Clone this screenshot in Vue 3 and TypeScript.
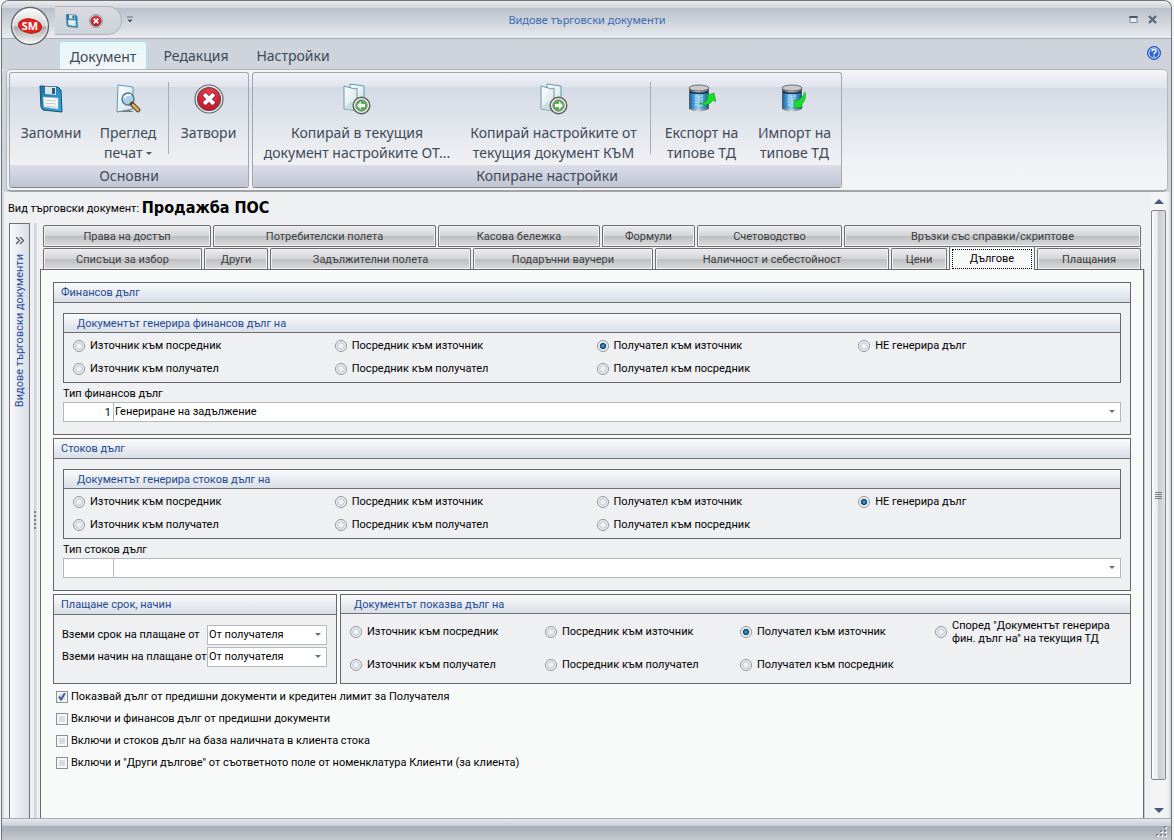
<script setup lang="ts">
import { ref } from 'vue'

const firstTabs = ['Права на достъп', 'Потребителски полета', 'Касова бележка', 'Формули', 'Счетоводство', 'Връзки със справки/скриптове']
const secondTabs = ['Списъци за избор', 'Други', 'Задължителни полета', 'Подаръчни ваучери', 'Наличност и себестойност', 'Цени', 'Дългове', 'Плащания']
const activeTab = ref('Дългове')
const ribbonTabs = ['Документ', 'Редакция', 'Настройки']

const directions = [
  'Източник към посредник', 'Посредник към източник', 'Получател към източник', 'НЕ генерира дълг',
  'Източник към получател', 'Посредник към получател', 'Получател към посредник',
]
const shownDirections = directions.map((d, i) => (i === 3 ? 'Според "Документът генерира фин. дълг на" на текущия ТД' : d))

const debts = ref([
  { id: 'fin', title: 'Финансов дълг', legend: 'Документът генерира финансов дълг на', type: 'Тип финансов дълг', code: '1', name: 'Генериране на задължение', choice: 2 },
  { id: 'stock', title: 'Стоков дълг', legend: 'Документът генерира стоков дълг на', type: 'Тип стоков дълг', code: '', name: '', choice: 3 },
])
const shown = ref(2)
const terms = [
  { id: 'term', label: 'Вземи срок на плащане от' },
  { id: 'method', label: 'Вземи начин на плащане от' },
]
const options = ref([
  { text: 'Показвай дълг от предишни документи и кредитен лимит за Получателя', on: true },
  { text: 'Включи и финансов дълг от предишни документи', on: false },
  { text: 'Включи и стоков дълг на база наличната в клиента стока', on: false },
  { text: 'Включи и "Други дългове" от съответното поле от номенклатура Клиенти (за клиента)', on: false },
])
</script>

<template>
  <div class="window">
    <svg class="defs" width="0" height="0" aria-hidden="true">
      <defs>
        <linearGradient id="blue" x1="0" y1="0" x2="1" y2="1"><stop offset="0" stop-color="#1c6f9c" /><stop offset="1" stop-color="#2fb0e4" /></linearGradient>
        <linearGradient id="paper" x1="0" y1="0" x2="1" y2="1"><stop offset="0" stop-color="#ffffff" /><stop offset="1" stop-color="#cfe0e6" /></linearGradient>
        <linearGradient id="metal" x1="0" y1="0" x2="1" y2="0"><stop offset="0" stop-color="#555" /><stop offset=".45" stop-color="#ddd" /><stop offset="1" stop-color="#555" /></linearGradient>
        <linearGradient id="tank" x1="0" y1="0" x2="1" y2="0"><stop offset="0" stop-color="#1367b4" /><stop offset=".45" stop-color="#8fd0f2" /><stop offset="1" stop-color="#1565a6" /></linearGradient>
        <linearGradient id="orb" x1="0" y1="0" x2="0" y2="1"><stop offset="0" stop-color="#fdfdfd" /><stop offset=".5" stop-color="#d4d4d4" /><stop offset=".52" stop-color="#a8a8a8" /><stop offset="1" stop-color="#fafafa" /></linearGradient>
        <radialGradient id="red" cx=".5" cy=".3" r=".8"><stop offset="0" stop-color="#ee4456" /><stop offset="1" stop-color="#c00824" /></radialGradient>
        <symbol id="floppy" viewBox="0 0 24 28">
          <path d="M1 1l18 1 3 3 1 22-19-2-2-3z" fill="url(#blue)" stroke="#14506f" />
          <path d="M6 1.500l11 .5v8L6 9z" fill="#dfe4e6" /><path d="M13 3h3v6h-3z" fill="#315f79" />
          <path d="M4 12l15 1v11L5 22z" fill="#fafafa" stroke="#b8c4c8" stroke-width=".6" />
          <path d="M6 15l11 1M6 18l11 1M6 21l11 1" stroke="#c6cbce" />
        </symbol>
        <symbol id="stop" viewBox="0 0 30 30">
          <circle cx="15" cy="15" r="14" fill="#ececec" stroke="#666" stroke-width="1.200" />
          <circle cx="15" cy="15" r="11.500" fill="url(#red)" stroke="#5e5052" stroke-width="1.200" />
          <path d="M11.500 11.500l7 7M18.500 11.500l-7 7" stroke="#8f1020" stroke-width="5.400" stroke-linecap="square" />
          <path d="M11.500 11.500l7 7M18.500 11.500l-7 7" stroke="#fff" stroke-width="4" stroke-linecap="square" />
        </symbol>
        <symbol id="preview" viewBox="0 0 26 30">
          <path d="M3 1l15 2v22L2 28z" fill="url(#paper)" stroke="#5f9ab4" />
          <path d="M2 28l12-2 5 2z" fill="#777" />
          <circle cx="13" cy="15" r="6" fill="#a6d3ea" stroke="#5b7686" stroke-width="1.400" />
          <path d="M9 14q2-4 7-3" stroke="#fff" stroke-width="1.600" fill="none" />
          <path d="M17 20l6 6" stroke="#5a4423" stroke-width="4.600" stroke-linecap="round" />
          <path d="M18 21l5 5" stroke="#d8b060" stroke-width="2.600" stroke-linecap="round" />
        </symbol>
        <symbol id="copy" viewBox="0 0 28 32">
          <path d="M7 1l14 2v22H7z" fill="url(#paper)" stroke="#5f9ab4" />
          <path d="M1 3l11 3 2-1v23L1 26z" fill="url(#paper)" stroke="#6c98ac" />
          <path d="M1 26q4-8 12-8v10z" fill="#bcd3d8" opacity=".6" />
          <circle cx="18.500" cy="22.500" r="8.300" fill="#f1f1ee" stroke="#5c5c58" stroke-width="1.400" />
          <circle cx="18.500" cy="22.500" r="5.700" fill="#56b356" stroke="#858580" />
        </symbol>
        <symbol id="drum" viewBox="0 0 28 30">
          <path d="M1 4v21q9 5 20 0V4z" fill="url(#metal)" />
          <path d="M2 7q9 4 18 0v17q-9 3-18 0z" fill="url(#tank)" />
          <path d="M2 7q9 3 18 0v2q-9 2-18 0z" fill="#102c50" />
          <path d="M8 11v12M11 12v11M14 11v12" stroke="#e7f6ff" stroke-width="1" stroke-dasharray="2 1" />
          <ellipse cx="11" cy="4" rx="10" ry="3" fill="#c9c9c9" stroke="#555" stroke-width=".8" />
        </symbol>
      </defs>
    </svg>

    <header class="titlebar">
      <div class="quick">
        <button aria-label="Запомни"><svg width="12" height="14"><use href="#floppy" /></svg></button>
        <button aria-label="Затвори"><svg width="14" height="14"><use href="#stop" /></svg></button>
      </div>
      <button class="more" aria-label="Още команди"><svg width="6" height="7"><path d="M0 1h6M1 4h4L3 6z" fill="#50565e" stroke="#50565e" stroke-width=".8" /></svg></button>
      <h1>Видове търговски документи</h1>
      <div class="controls">
        <button aria-label="Увеличи"><svg width="10" height="10"><path d="M1 1.500h7v6H1z" fill="#e8ecf1" stroke="#7c8a9c" /><path d="M.5 1h8v2h-8z" fill="#4a5565" /></svg></button>
        <button aria-label="Затвори прозореца"><svg width="10" height="10"><path d="M1 1l7 7M8 1L1 8" stroke="#586a80" stroke-width="2.400" /></svg></button>
      </div>
      <button class="orb" aria-label="Меню">
        <svg width="40" height="40" viewBox="0 0 40 40">
          <circle cx="20" cy="20" r="18.500" fill="url(#orb)" stroke="#65696f" stroke-width="1.400" />
          <circle cx="20" cy="20" r="17" fill="none" stroke="#fff" opacity=".8" />
          <ellipse cx="20" cy="20" rx="11.500" ry="7" transform="rotate(8 20 20)" fill="#e3221d" stroke="#b91813" />
          <text x="20" y="24" text-anchor="middle">SM</text>
        </svg>
      </button>
    </header>

    <nav class="ribbon-tabs">
      <button v-for="(t, i) in ribbonTabs" :key="t" :class="{ current: i === 0 }">{{ t }}</button>
      <button class="help" aria-label="Помощ">
        <svg width="14" height="14" viewBox="0 0 14 14"><circle cx="7" cy="7" r="6.500" fill="#2c62d8" stroke="#2450b4" /><circle cx="7" cy="7" r="5.200" fill="none" stroke="#dce8ff" /><path d="M5 5.500q0-2 2-2t2 1.800q0 1-1.200 1.600-.8.400-.8 1.300M7 9.600v1.200" stroke="#fff" stroke-width="1.500" fill="none" /></svg>
      </button>
    </nav>

    <section class="ribbon">
      <div class="ribbon-group">
        <div class="tools">
          <button class="tool w-save"><svg width="24" height="32"><use href="#floppy" /></svg><span>Запомни</span></button>
          <button class="tool w-view"><svg width="26" height="32"><use href="#preview" /></svg><span>Преглед<br>печат <i class="caret"></i></span></button>
          <i class="bar"></i>
          <button class="tool w-close"><svg width="30" height="32"><use href="#stop" /></svg><span>Затвори</span></button>
        </div>
        <footer>Основни</footer>
      </div>
      <div class="ribbon-group">
        <div class="tools wide">
          <button class="tool w-from">
            <svg width="28" height="32"><use href="#copy" /><path d="M14 22.500l4-4v2.500h4v3h-4v2.500z" fill="#fff" /></svg>
            <span>Копирай в текущия<br>документ настройките ОТ...</span>
          </button>
          <button class="tool w-to">
            <svg width="28" height="32"><use href="#copy" /><path d="M23 22.500l-4-4v2.500h-4v3h4v2.500z" fill="#fff" /></svg>
            <span>Копирай настройките от<br>текущия документ КЪМ</span>
          </button>
          <i class="bar"></i>
          <button class="tool w-type">
            <svg width="28" height="32"><use href="#drum" /><path d="M11 20q8 1 9-6l-3-1 9-3 2 9-3-2q-5 8-14 3z" fill="#14e028" stroke="#129a20" stroke-width=".6" /></svg>
            <span>Експорт на<br>типове ТД</span>
          </button>
          <button class="tool w-type">
            <svg width="28" height="32"><use href="#drum" /><path d="M24 9q2 8-4 13l2 2-9 1 1-9 2 2q6-3 8-9z" fill="#14e028" stroke="#129a20" stroke-width=".6" /></svg>
            <span>Импорт на<br>типове ТД</span>
          </button>
        </div>
        <footer>Копиране настройки</footer>
      </div>
    </section>

    <main class="body">
      <div class="page">
        <p class="kind">Вид търговски документ: <strong>Продажба ПОС</strong></p>
        <div class="split">
          <aside class="side">
            <button aria-label="Разгъни"><svg width="8" height="8"><path d="M0 0l3.500 3.500L0 7M4 0l3.500 3.500L4 7" fill="none" stroke="#555b63" stroke-width="1.400" /></svg></button>
            <span>Видове търговски документи</span>
          </aside>
          <div class="splitter"><i></i></div>
          <div class="tabs">
            <div class="tab-row first"><button v-for="t in firstTabs" :key="t" :class="{ active: t === activeTab }" @click="activeTab = t">{{ t }}</button></div>
            <div class="tab-row second"><button v-for="t in secondTabs" :key="t" :class="{ active: t === activeTab }" @click="activeTab = t"><span>{{ t }}</span></button></div>
            <div class="panel">
              <section v-for="d in debts" :key="d.id" class="group">
                <h2>{{ d.title }}</h2>
                <div class="debt">
                  <fieldset class="group inner">
                    <h3>{{ d.legend }}</h3>
                    <div class="radios">
                      <label v-for="(r, i) in directions" :key="r"><input v-model="d.choice" type="radio" :name="d.id" :value="i"><span>{{ r }}</span></label>
                    </div>
                  </fieldset>
                  <label class="type" :for="d.id + '-name'">{{ d.type }}</label>
                  <div class="lookup">
                    <input v-model="d.code" type="text" class="code" :aria-label="d.type + ' код'">
                    <div class="select"><select :id="d.id + '-name'"><option>{{ d.name }}</option></select></div>
                  </div>
                </div>
              </section>
              <div class="pair">
                <section class="group pay">
                  <h2>Плащане срок, начин</h2>
                  <div class="terms">
                    <template v-for="t in terms" :key="t.id">
                      <label :for="t.id">{{ t.label }}</label>
                      <div class="select"><select :id="t.id"><option>От получателя</option></select></div>
                    </template>
                  </div>
                </section>
                <fieldset class="group shows">
                  <h3>Документът показва дълг на</h3>
                  <div class="radios tall">
                    <label v-for="(r, i) in shownDirections" :key="r"><input v-model="shown" type="radio" name="shown" :value="i"><span>{{ r }}</span></label>
                  </div>
                </fieldset>
              </div>
              <div class="checks">
                <label v-for="o in options" :key="o.text">
                  <span class="tick"><input v-model="o.on" type="checkbox"><svg v-if="o.on" width="8" height="8"><path d="M1 3.500l2 3L7 0" fill="none" stroke="#3c639c" stroke-width="2" /></svg></span>
                  {{ o.text }}
                </label>
              </div>
            </div>
          </div>
        </div>
      </div>
      <div class="scroll">
        <button aria-label="Нагоре"><svg width="10" height="5"><path d="M0 5l5-5 5 5z" fill="#43587f" /></svg></button>
        <div class="thumb"><i></i></div>
        <button aria-label="Надолу"><svg width="10" height="5"><path d="M0 0l5 5 5-5z" fill="#43587f" /></svg></button>
      </div>
    </main>

    <footer class="status">
      <svg width="12" height="12"><path d="M9 0h2v2H9zM5 4h2v2H5zM9 4h2v2H9zM1 8h2v2H1zM5 8h2v2H5zM9 8h2v2H9z" fill="#fff" transform="translate(1 1)" /><path d="M9 0h2v2H9zM5 4h2v2H5zM9 4h2v2H9zM1 8h2v2H1zM5 8h2v2H5zM9 8h2v2H9z" fill="#81868d" /></svg>
    </footer>
  </div>
</template>

<style>
body { margin: 0; background: #f4f4f4; }
</style>

<style scoped>
* { box-sizing: border-box; }
.window {
  display: flex; flex-direction: column; min-height: 100vh; margin: 0 2px 0 1px;
  border: 1px solid #6d727b; border-bottom: 0; border-radius: 8px 8px 0 0;
  background: #eff0f2; color: #000;
  font: 11px/14px Roboto, Tahoma, sans-serif; overflow: hidden;
}
.defs { position: absolute; }
button { padding: 0; border: 0; background: none; color: inherit; font: inherit; }
h1, h2, h3, p { margin: 0; font: inherit; }
i { display: block; }

.titlebar {
  position: relative; display: flex; align-items: center; height: 38px;
  border-bottom: 1px solid #a7abb6;
  background: linear-gradient(#ececef 0, #cfd2d8 7px, #b8c0cb 7px, #dde1e6 30px, #e9ecf3 100%);
}
.titlebar h1 { flex: 1; margin-right: 88px; text-align: center; color: #3b6cb0; font: 11px/14px "Noto Sans", sans-serif; }
.quick {
  display: flex; align-items: center; gap: 11px; align-self: flex-start; width: 67px; height: 29px; margin: 5px 0 0 53px; padding-left: 11px;
  border: 1px solid #b2b5bc; border-left: 0; border-radius: 0 15px 15px 0;
  background: linear-gradient(#d9dbe0, #cdd1d9);
}
.quick button { height: 14px; }
.quick svg, .more svg, .controls svg, .orb svg, .help svg { display: block; }
.more { margin-left: 5px; }
.controls { display: flex; gap: 9px; margin-right: 13px; }
.orb { position: absolute; left: 8px; top: 5px; }
.orb text { font: bold 11px "Noto Sans", sans-serif; fill: #fff; }

.ribbon-tabs {
  display: flex; align-items: flex-end; height: 30px; padding: 0 10px 0 57px;
  background: #cfd3dc; color: #3f4a57; font: 14px/20px "Noto Sans", sans-serif;
}
.ribbon-tabs button { width: 94px; height: 28px; padding-top: 2px; }
.ribbon-tabs button:nth-child(2) { width: 98px; }
.ribbon-tabs button:nth-child(3) { width: 96px; }
.ribbon-tabs .current {
  width: 88px; border: 1px solid #a8e4ec; border-bottom: 0; border-radius: 4px 4px 0 0;
  background: linear-gradient(#e6f7f9, #f4f5f9);
}
.ribbon-tabs .help { width: 14px; height: 14px; margin: 0 0 9px auto; padding: 0; }

.ribbon {
  display: flex; gap: 3px; margin: 0 3px 0 4px; padding: 2px;
  border: 1px solid #b6b7bb; border-bottom: 2px solid #a2a3a6; border-radius: 5px;
  background: linear-gradient(#f4f5f9 0, #e1e5ee 18px, #d5dae5 18px, #eff1f4 90px, #f3f4f5 100%);
  box-shadow: 0 0 0 4px #cfd3dc; clip-path: inset(0 -4px 0 -4px);
  color: #3f4a57; font: 14px/20px "Noto Sans", sans-serif;
}
.ribbon-group {
  border: 1px solid #a3a6ae; border-bottom-color: #84868c; border-radius: 3px;
  background: linear-gradient(#eff1f6 0, #e0e4ed 14px, #d4dae5 14px, #f0f1f3 92px);
}
.ribbon-group footer { height: 22px; line-height: 22px; text-align: center; background: linear-gradient(#dbdee9, #c1c5d2); }
.tools { display: flex; height: 92px; padding-left: 4px; }
.tool { display: flex; flex-direction: column; align-items: center; justify-content: flex-start; color: inherit; white-space: nowrap; }
.tool svg { flex: none; margin: 10px 0 auto; }
.tool span { display: block; height: 42px; }
.w-save { width: 74px; }
.w-view { width: 80px; }
.w-close { width: 79px; }
.w-from { width: 200px; }
.w-to { width: 193px; }
.w-type { width: 93px; }
.bar { width: 1px; height: 72px; margin-top: 9px; background: #a9adb6; }
.wide .bar { margin-right: 4px; }
.caret { display: inline-block; vertical-align: 3px; border: 3px solid transparent; border-top-color: #50565e; border-bottom: 0; }

.body { display: flex; flex: 1; padding-right: 3px; border-left: 2px solid #d5d8de; border-right: 2px solid #d5d8de; }
.page { display: flex; flex: 1; flex-direction: column; min-width: 0; }
.kind { height: 31px; padding-left: 4px; line-height: 31px; }
.kind strong { font: bold 16px/31px "DejaVu Sans Condensed", Tahoma, sans-serif; vertical-align: -1px; }
.split { display: flex; flex: 1; }
.side {
  display: flex; flex-direction: column; align-items: center; width: 21px; margin-left: 5px; padding-top: 13px;
  border: 1px solid #6f7177; border-bottom: 0; background: linear-gradient(90deg, #f8f9fb, #d9dde6); color: #1c4b9c;
}
.side svg { display: block; }
.side span { margin-top: 9px; writing-mode: vertical-rl; transform: rotate(180deg); }
.splitter { display: flex; align-items: center; width: 10px; padding-left: 3px; background: linear-gradient(90deg, transparent 4px, #cdd1da 4px, #dfe2e8 7px, transparent 7px); }
.splitter i { width: 4px; height: 20px; background: repeating-linear-gradient(#777c85 0, #777c85 2px, transparent 2px, transparent 4px) 1px 0 / 2px 100% no-repeat; }
.tabs { flex: 1; display: flex; flex-direction: column; min-width: 0; padding-top: 2px; margin-right: 7px; }

.tab-row { display: grid; gap: 2px; padding: 0 3px; color: #3a3c40; }
.first { grid-template-columns: 168fr 223fr 162fr 93fr 145fr 297fr; margin-bottom: 1px; }
.second { grid-template-columns: 159fr 64fr 201fr 180fr 234fr 56fr 86fr 104fr; }
.tab-row button {
  height: 22px; min-width: 0; padding-top: 1px; border: 1px solid #6d6f74; border-radius: 2px 2px 0 0;
  background: linear-gradient(#ececee 0, #d3d4d7 50%, #bdbec0 50%, #dadada 100%);
  box-shadow: inset 0 0 0 1px #f1f1f2; white-space: nowrap;
}
.second button { height: 21px; border-bottom: 0; }
.tab-row .active { z-index: 1; height: 24px; margin: -2px 0 -1px; padding: 2px; background: #f8f9f9; color: #000; }
.active span { display: block; height: 20px; border: 1px dotted #000; line-height: 18px; }
.panel {
  flex: 1; padding: 12px 12px 0; border: 1px solid #66686c; border-bottom: 0;
  background: #f8faf9; box-shadow: 1px 0 #c8cacc;
}

.group { min-width: 0; margin: 0 0 3px; padding: 0; border: 1px solid #65676c; background: #eff0f2; }
.group h2, .group h3 {
  height: 20px; padding-left: 7px; border-bottom: 1px solid #6f7177; line-height: 20px; color: #1d4b93;
  background: linear-gradient(#fbfbfc, #e9ecf1 50%, #d9dfe8);
}
.group h3 { height: 19px; padding-left: 13px; }
.debt { padding: 10px 9px 12px; }
.inner { margin: 0; height: 70px; }
.radios { display: grid; grid-template-columns: repeat(4, 1fr); grid-auto-rows: 23px; padding: 1px 0 0 9px; }
.tall { grid-auto-rows: 33px; line-height: 13px; }
.radios label { display: flex; align-items: center; gap: 5px; }
.radios input, .tick input { flex: none; width: 12px; height: 12px; margin: 0; appearance: none; }
.radios input { border: 1px solid #8e949e; border-radius: 50%; background: radial-gradient(closest-side, #f1f2f4 40%, #c0c7d1 66%, #f2f3f5 84%); }
.radios input:checked { background: radial-gradient(closest-side, #5fb9d6 0, #1f6c98 34%, #153f6c 56%, #d8e2ee 68%, #f0f3f7 84%); }
.type { display: block; margin: 4px 0 1px; }
.lookup { display: flex; height: 20px; }
.lookup .select { flex: 1; }
input.code, select { width: 100%; height: 100%; border: 1px solid #b4b8bf; border-radius: 0; background: #fff; color: #000; font: inherit; }
input.code { width: 51px; margin-right: -1px; padding: 0 2px; text-align: right; }
.select { position: relative; height: 20px; }
.select::after { content: ""; position: absolute; right: 6px; top: 8px; border: 3px solid transparent; border-top-color: #6d7076; border-bottom: 0; pointer-events: none; }
select { padding: 0 1px; appearance: none; }

.pair { display: grid; grid-template-columns: 284fr 791fr; gap: 3px; height: 90px; }
.pair .group { margin: 0; }
.terms { display: grid; grid-template-columns: 145px 120px; gap: 2px 0; align-items: center; padding: 10px 0 0 8px; white-space: nowrap; }
.checks { display: flex; flex-direction: column; gap: 8px; padding: 6px 3px; }
.checks label { display: flex; align-items: center; gap: 3px; }
.tick { position: relative; display: block; height: 12px; }
.tick input { display: block; border: 1px solid #8c9097; background: #d9dce1; box-shadow: inset 0 0 0 2px #f5f6f7; }
.tick svg { position: absolute; left: 2px; top: 2px; }

.scroll { display: flex; flex-direction: column; width: 15px; background: #f3f3f4; }
.scroll button { height: 18px; }
.scroll svg { display: block; margin: 0 auto; }
.scroll button:last-child { height: 38px; padding-top: 22px; }
.thumb { display: flex; flex: 1; align-items: center; justify-content: center; border: 1px solid #85878c; border-radius: 2px; background: linear-gradient(90deg, #fafafa, #e7e8ea 45%, #c9cbd0 50%, #dedfe2); }
.thumb i { width: 7px; height: 7px; background: repeating-linear-gradient(#7b7e84 0, #7b7e84 1px, transparent 1px, transparent 2px); }

.status {
  display: flex; align-items: flex-end; justify-content: flex-end; height: 22px; padding: 0 4px 2px;
  border-top: 1px solid #a6a9b4; background: linear-gradient(#e6e7ef 0, #c9cdd6 7px, #a7adb6 7px, #c5c8cd 100%);
}
</style>
